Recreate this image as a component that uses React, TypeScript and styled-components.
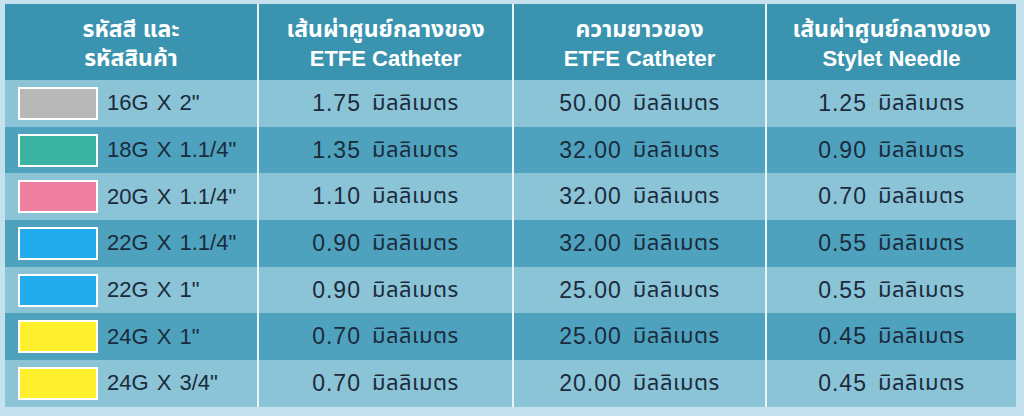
import React from 'react';
import styled, { createGlobalStyle } from 'styled-components';

const GlobalStyle = createGlobalStyle`
  html, body {
    margin: 0;
    padding: 0;
    background: #c3e2ee;
  }
  body {
    font-family: 'Liberation Sans', 'Noto Sans Thai', 'Noto Sans', Arial, sans-serif;
  }
`;

const rows = [
  { color: '#b8b8b8', size: '16G X 2"', cath: '1.75', len: '50.00', needle: '1.25' },
  { color: '#3bb3a3', size: '18G X 1.1/4"', cath: '1.35', len: '32.00', needle: '0.90' },
  { color: '#ef7fa0', size: '20G X 1.1/4"', cath: '1.10', len: '32.00', needle: '0.70' },
  { color: '#22acee', size: '22G X 1.1/4"', cath: '0.90', len: '32.00', needle: '0.55' },
  { color: '#22acee', size: '22G X 1"', cath: '0.90', len: '25.00', needle: '0.55' },
  { color: '#fff02e', size: '24G X 1"', cath: '0.70', len: '25.00', needle: '0.45' },
  { color: '#fff02e', size: '24G X 3/4"', cath: '0.70', len: '20.00', needle: '0.45' },
];

const UNIT = 'มิลลิเมตร';

export default function App() {
  return (
    <>
      <GlobalStyle />
      <Page>
        <Table>
          <Header>
            <HeadCell>
              <Thai>รหัสสี และ</Thai>
              <Thai>รหัสสินค้า</Thai>
            </HeadCell>
            <HeadCell>
              <Thai>เส้นผ่าศูนย์กลางของ</Thai>
              <Latin>ETFE Catheter</Latin>
            </HeadCell>
            <HeadCell>
              <Thai>ความยาวของ</Thai>
              <Latin>ETFE Catheter</Latin>
            </HeadCell>
            <HeadCell>
              <Thai>เส้นผ่าศูนย์กลางของ</Thai>
              <Latin>Stylet Needle</Latin>
            </HeadCell>
          </Header>
          {rows.map((r, i) => (
            <Row key={i} $dark={i % 2 === 1}>
              <CodeCell>
                <Swatch $color={r.color} />
                <span>{r.size}</span>
              </CodeCell>
              <Cell>
                <Num>{r.cath}</Num>
                <Unit>{UNIT}</Unit>
              </Cell>
              <Cell>
                <Num>{r.len}</Num>
                <Unit>{UNIT}</Unit>
              </Cell>
              <Cell>
                <Num>{r.needle}</Num>
                <Unit>{UNIT}</Unit>
              </Cell>
            </Row>
          ))}
        </Table>
      </Page>
    </>
  );
}

const Page = styled.div`
  width: 1024px;
  height: 416px;
  padding: 4px 8px 9px 5px;
  box-sizing: border-box;
`;

const Table = styled.div`
  display: flex;
  flex-direction: column;
  width: 1011px;
`;

const cols = `254px 255px 253px 249px`;

const Header = styled.div`
  display: grid;
  grid-template-columns: ${cols};
  height: 76px;
  background: #3a94af;
`;

const HeadCell = styled.div`
  display: flex;
  flex-direction: column;
  align-items: center;
  justify-content: center;
  padding-top: 4px;
  text-align: center;
  color: #ffffff;
  font-weight: bold;
  line-height: 29px;
  border-right: 2px solid #e8f4f8;
  &:last-child {
    border-right: none;
  }
`;

const Thai = styled.div`
  font-size: 23px;
`;

const Latin = styled.div`
  font-size: 22px;
`;

const Row = styled.div<{ $dark: boolean }>`
  display: grid;
  grid-template-columns: ${cols};
  height: 46.7px;
  background: ${p => (p.$dark ? '#4ea2be' : '#8bc3d7')};
`;

const Cell = styled.div`
  display: flex;
  align-items: center;
  justify-content: center;
  gap: 11px;
  color: #1b2b3b;
  font-size: 22px;
  border-right: 2px solid #e8f4f8;
  &:last-child {
    border-right: none;
  }
`;

const Num = styled.span`
  font-size: 23px;
  letter-spacing: 1px;
`;

const Unit = styled.span`
  font-size: 22px;
  letter-spacing: 0.5px;
`;

const CodeCell = styled(Cell)`
  justify-content: flex-start;
  padding-left: 13px;
  gap: 9px;
  word-spacing: 2px;
`;

const Swatch = styled.div<{ $color: string }>`
  width: 76px;
  height: 29px;
  background: ${p => p.$color};
  border: 2px solid #ffffff;
  flex-shrink: 0;
`;
